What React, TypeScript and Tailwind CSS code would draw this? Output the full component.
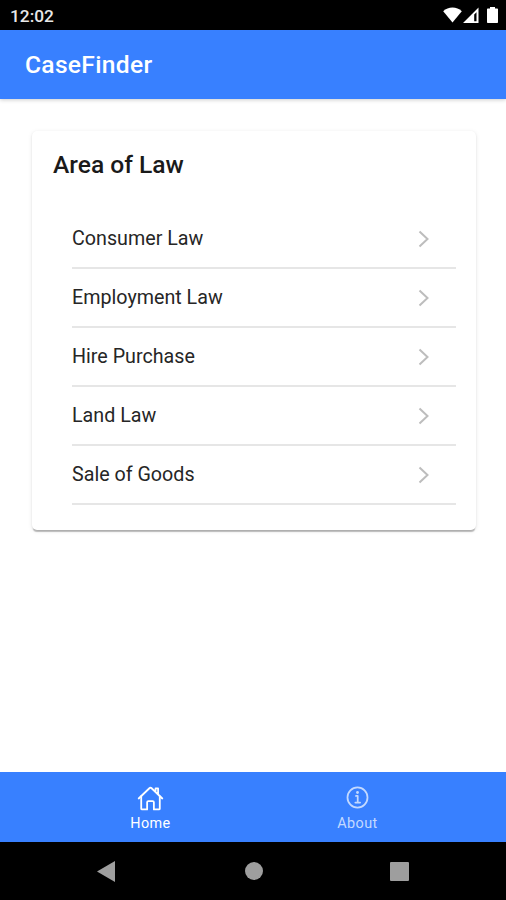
import React from 'react';

const AREAS = ['Consumer Law', 'Employment Law', 'Hire Purchase', 'Land Law', 'Sale of Goods'];

function StatusBar() {
  return (
    <div className="flex h-[30px] shrink-0 items-center justify-between bg-black pl-[10px] pr-2 text-white">
      <span className="pt-[3px] text-[17.3px] leading-none font-medium text-[#e8e8e8]">12:02</span>
      <div className="flex items-center" aria-hidden="true">
        <svg width="19" height="16" viewBox="0 0 19 16" fill="currentColor">
          <path d="M9.5 15.5.2 4.2C5.2-.8 13.8-.8 18.8 4.2z" />
        </svg>
        <svg className="ml-px" width="16" height="16" viewBox="0 0 16 16" fill="currentColor">
          <path fillRule="evenodd" d="M0 16 15.5.5V16zM11.2 7.5v6.8h2.3V5.3z" />
        </svg>
        <svg className="ml-[8px]" width="11" height="16" viewBox="0 0 11 16" fill="currentColor">
          <path d="M3 0h5v1.5h2.2q.8 0 .8.8v12.9q0 .8-.8.8H.8q-.8 0-.8-.8V2.3q0-.8.8-.8H3z" />
        </svg>
      </div>
    </div>
  );
}

function AreaItem({ label }: { label: string }) {
  return (
    <li className="flex h-[59.1px] items-center justify-between border-b-2 border-[#e6e6e6] pr-[26px]">
      <span className="text-[19.7px] leading-none text-[#262626]">{label}</span>
      <svg width="13" height="18" viewBox="0 0 13 18" fill="none" stroke="#bdbdbd" strokeWidth="2" aria-hidden="true">
        <path d="m2.5 1.5 8 7.5-8 7.5" />
      </svg>
    </li>
  );
}

function TabBar() {
  return (
    <nav className="flex h-[70px] shrink-0 justify-center bg-[#3880ff] pl-[2px] text-[14.4px] leading-none tracking-[0.4px]">
      <a className="flex w-[207px] flex-col items-center pt-[13px] text-white">
        <svg width="27" height="27" viewBox="0 0 512 512" fill="none" stroke="currentColor" strokeWidth="34" strokeLinecap="round" strokeLinejoin="round" aria-hidden="true">
          <path d="M80 212v236a16 16 0 0016 16h96V328a24 24 0 0124-24h80a24 24 0 0124 24v136h96a16 16 0 0016-16V212" />
          <path d="M480 256L266.89 52c-5-5.28-16.69-5.34-21.78 0L32 256M400 179V64h-48v69" />
        </svg>
        <span className="mt-[5px]">Home</span>
      </a>
      <a className="flex w-[207px] flex-col items-center pt-[12px] text-[#c3d9ff]">
        <svg width="27" height="27" viewBox="0 0 496 496" fill="none" stroke="currentColor" strokeWidth="32" strokeLinecap="round" strokeLinejoin="round" aria-hidden="true">
          <path d="M248 64C146.39 64 64 146.39 64 248s82.39 184 184 184 184-82.39 184-184S349.61 64 248 64z" />
          <path d="M220 220h32v116M208 340h88" />
          <circle cx="248" cy="156" r="26" fill="currentColor" stroke="none" />
        </svg>
        <span className="mt-[6px]">About</span>
      </a>
    </nav>
  );
}

function SystemNav() {
  return (
    <div className="flex h-[58px] shrink-0 items-center justify-between bg-black px-[97px] text-[#9e9e9e]" aria-hidden="true">
      <svg width="18" height="21" viewBox="0 0 18 21" fill="currentColor">
        <path d="M0 10.5 18 0v21z" />
      </svg>
      <div className="ml-[2px] size-[18px] rounded-full bg-current" />
      <div className="size-[19px] rounded-[1px] bg-current" />
    </div>
  );
}

export default function App() {
  return (
    <div className="flex h-[900px] w-[506px] flex-col bg-white font-['Roboto',sans-serif]">
      <StatusBar />
      <header className="z-10 flex h-[69px] shrink-0 items-center bg-[#3880ff] px-[25px] pt-[2px] shadow-[0_1px_4px_rgba(0,0,0,0.2)]">
        <h1 className="text-[24.6px] leading-none font-medium tracking-[0.3px] text-white">CaseFinder</h1>
      </header>
      <main className="flex-1 pt-8 pr-[30px] pl-8">
        <section className="h-[399px] rounded-[5px] bg-white pr-5 pl-[21px] shadow-[0_3px_1px_-1px_rgba(0,0,0,0.22),0_1px_2px_rgba(0,0,0,0.1),0_1px_5px_rgba(0,0,0,0.08)]">
          <h2 className="flex h-[79px] items-start pt-[22px] text-[24.6px] leading-none font-medium text-[#1a1a1a]">Area of Law</h2>
          <ul className="pl-[19px]">
            {AREAS.map((label) => (
              <AreaItem key={label} label={label} />
            ))}
          </ul>
        </section>
      </main>
      <TabBar />
      <SystemNav />
    </div>
  );
}
